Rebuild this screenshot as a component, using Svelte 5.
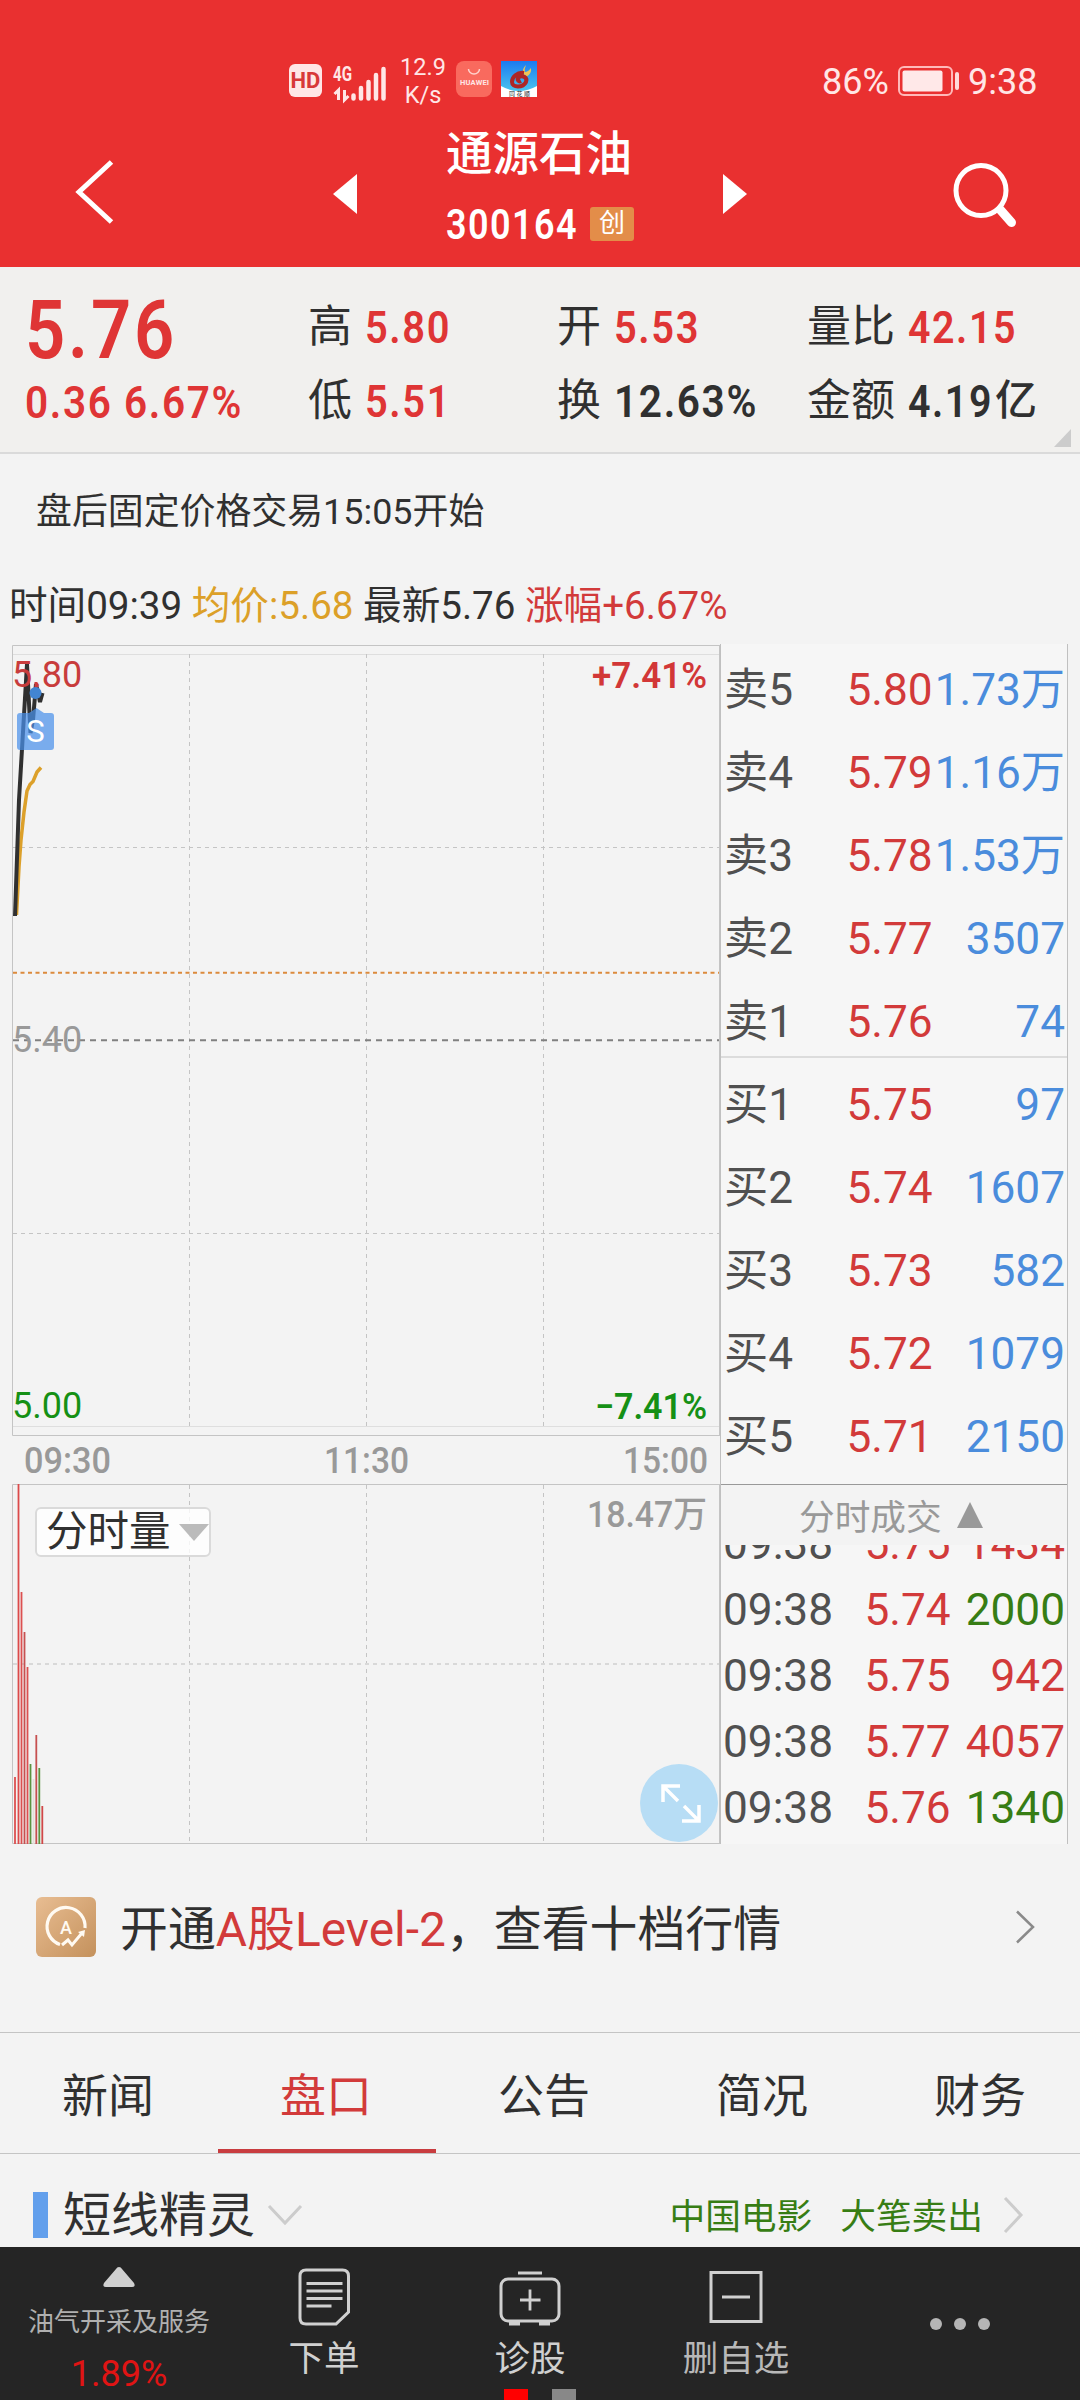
<script lang="ts">
	type Stat = { label: string; value: string; width: number; unit?: string; dark?: boolean };

	const stats: Stat[] = [
		{ label: '高', value: '5.80', width: 86 },
		{ label: '开', value: '5.53', width: 86 },
		{ label: '量比', value: '42.15', width: 109 },
		{ label: '低', value: '5.51', width: 86 },
		{ label: '换', value: '12.63%', width: 144, dark: true },
		{ label: '金额', value: '4.19', width: 85, unit: '亿', dark: true }
	];

	const orders = [
		['卖5', '5.80', '1.73万'],
		['卖4', '5.79', '1.16万'],
		['卖3', '5.78', '1.53万'],
		['卖2', '5.77', '3507'],
		['卖1', '5.76', '74'],
		['买1', '5.75', '97'],
		['买2', '5.74', '1607'],
		['买3', '5.73', '582'],
		['买4', '5.72', '1079'],
		['买5', '5.71', '2150']
	];

	const trades = [
		{ price: '5.75', vol: '1434', up: true },
		{ price: '5.74', vol: '2000', up: false },
		{ price: '5.75', vol: '942', up: true },
		{ price: '5.77', vol: '4057', up: true },
		{ price: '5.76', vol: '1340', up: false }
	];

	// x, top, colour of each minute's volume bar
	const bars: [number, number, string][] = [
		[15, 1777, '#dc5050'],
		[18.5, 1484, '#dc4a4a'],
		[21.5, 1592, '#dc5050'],
		[24.5, 1632, '#c65050'],
		[27.5, 1667, '#dc5050'],
		[30.5, 1764, '#5a9440'],
		[33.5, 1779, '#e4e0d8'],
		[36.3, 1735, '#c65050'],
		[39.3, 1768, '#5a9440'],
		[42.3, 1806, '#d04848']
	];

	const columns = [189.5, 366.5, 543.5];
	const tabs = ['新闻', '盘口', '公告', '简况', '财务'];
	let activeTab = $state('盘口');
</script>

{#snippet num(text: string, size: number, width: number)}
	<svg class="num" {width} height={size} viewBox="0 0 {width} {size}">
		<text x="0" y={size * 0.856} font-size={size} textLength={width} lengthAdjust="spacingAndGlyphs">{text}</text>
	</svg>
{/snippet}

<div class="screen">
	<header>
		<div class="status">
			<span class="hd">HD</span>
			<svg class="signal" width="56" height="46" viewBox="332 58 56 46">
				<text x="333" y="77" font-size="20" font-weight="700" textLength="19" lengthAdjust="spacingAndGlyphs">4G</text>
				<path d="M338.500 96V86l-4 4M344.500 86v10l4-4" fill="none" stroke="#ffe6e6" stroke-width="3" />
				<path d="M353.500 94.500v-3M361 94.500V84M368.500 94.500v-16.500M376 94.500V71M383.500 94.500V65" stroke="#ffe6e6" stroke-width="4.500" stroke-linecap="round" />
			</svg>
			<div class="speed"><span>12.9</span><span>K/s</span></div>
			<svg class="apps" width="82" height="37" viewBox="0 0 82 37">
				<rect width="36" height="36" rx="8" fill="#f96a5e" />
				<path d="M12.500 8a5.500 5 0 0 0 11 0" fill="none" stroke="#ffd2cc" stroke-width="1.500" />
				<text x="4" y="24" font-size="7.500" font-weight="700" textLength="29">HUAWEI</text>
				<defs>
					<linearGradient id="sky" x2="0" y2="1">
						<stop offset="0" stop-color="#1c7af0" />
						<stop offset="1" stop-color="#4cc6ee" />
					</linearGradient>
				</defs>
				<rect x="45" width="36" height="31" fill="url(#sky)" />
				<path d="M45 25q18 10 36 0v11H45z" fill="#fff" />
				<path d="M70 4q-2 4-1 7q3 0 6-4q1 6-5 9l-3-4q-1-4 3-8z" fill="#ecc35a" />
				<path d="M68 12c-7-1-12 4-12 9 0 6 11 6 14 0 2-5-4-7-7-5-3 3 0 5 2 4" fill="none" stroke="#ad2626" stroke-width="4" />
				<text x="53" y="35" class="tiny" font-size="6" textLength="21">同花顺</text>
			</svg>
			<span class="battery-text">86%</span>
			<svg class="battery" width="62" height="30" viewBox="0 0 62 30">
				<rect x="1" y="1" width="53" height="28" rx="5" fill="none" stroke="#ffb9b9" stroke-width="2" />
				<rect x="4.500" y="4.500" width="40" height="21" rx="2" fill="#ffe8e8" />
				<rect x="57" y="6" width="4" height="18" rx="2" fill="#ffd9d9" />
			</svg>
			<span class="clock">9:38</span>
		</div>

		<div class="title-bar">
			<svg class="back" width="44" height="70" viewBox="72 157 44 70">
				<path d="M111.500 162L79 192l32.500 30" fill="none" stroke="#fff" stroke-width="5" />
			</svg>
			<svg class="prev" width="24" height="40" viewBox="0 0 24 40"><path d="M24 0v40L0 20z" fill="#fff" /></svg>
			<div class="name">
				<h1>通源石油</h1>
				<div class="code">{@render num('300164', 42, 132)}<span class="badge">创</span></div>
			</div>
			<svg class="next" width="24" height="40" viewBox="0 0 24 40"><path d="M0 0v40l24-20z" fill="#fff" /></svg>
			<svg class="search" width="70" height="70" viewBox="950 160 70 70">
				<circle cx="981" cy="190.500" r="25" fill="none" stroke="#fff" stroke-width="5" />
				<path d="M1000.500 210l11 12.500" stroke="#fff" stroke-width="9" stroke-linecap="round" />
			</svg>
		</div>
	</header>

	<section class="quote">
		<div class="last">
			<div class="price">{@render num('5.76', 82, 152)}</div>
			<div class="change">{@render num('0.36 6.67%', 44, 218)}</div>
		</div>
		<div class="stats">
			{#each stats as s}
				<div class="stat" class:dark={s.dark}>
					<span class="label">{s.label}</span>
					{@render num(s.value, 44, s.width)}
					{#if s.unit}<span class="unit">{s.unit}</span>{/if}
				</div>
			{/each}
		</div>
		<i class="corner"></i>
	</section>

	<p class="notice">盘后固定价格交易15:05开始</p>
	<p class="legend">时间09:39 <span class="avg">均价:5.68</span> 最新5.76 <span class="red">涨幅+6.67%</span></p>

	<section class="market">
		<div class="chart">
			<svg width="720" height="1200" viewBox="0 644 720 1200">
				<g fill="none" stroke="#c4c4c4">
					<path d="M12.500 1435.500V645.500H720M12.500 1435.500H720M12.500 1843.500V1484.500H720M12.500 1843.500H720M719.500 645V1435M719.500 1484V1843" />
					<path d="M13 654.500H719M13 1426.500H719" stroke="#dedede" />
					{#each columns as x}
						<path d="M{x} 654V1426M{x} 1485V1843" stroke-dasharray="4 4" />
					{/each}
					<path d="M13 847.500H719M13 1233.500H719" stroke-dasharray="4 4" />
					<path d="M13 1664H719" stroke="#d8d8d8" stroke-width="2" stroke-dasharray="4 4" />
					<path d="M13 972.700H719" stroke="#dc8a3c" stroke-width="2" stroke-dasharray="4 3.500" />
					<path d="M13 1040.300H719" stroke="#808080" stroke-width="2" stroke-dasharray="6 5" />
				</g>

				{#each bars as [x, top, colour]}
					<path d="M{x} {top}V1844" stroke={colour} stroke-width="1.800" />
				{/each}

				<path d="M16.500 915L19 867 21 840 24 812 27 791 30 784.500 33 781.500 37 772 41 767.500" fill="none" stroke="#dca02a" stroke-width="3.500" />
				<path d="M15 916L19 800 23 732 27 664 30.500 733 33 720 36 684 40 702 42.500 693" fill="none" stroke="#303030" stroke-width="4" />
				<path d="M36 682v6" stroke="#d23c3c" stroke-width="3" />
				<circle cx="35.500" cy="693" r="6" fill="#4285d2" />
				<path d="M20 713h9l7.500-5 7.500 5h7q3 0 3 3v31q0 3-3 3H20q-3 0-3-3v-31q0-3 3-3z" fill="#4a90ea" fill-opacity=".72" />
				<text x="35.500" y="741.500" font-size="31" text-anchor="middle" fill="#fff">S</text>

				<g font-size="36">
					<text x="12" y="687" fill="#c83c3c">5.80</text>
					<text x="12" y="1052" fill="#999">5.40</text>
					<text x="12" y="1418" fill="#159015">5.00</text>
					<g font-weight="600">
						<text x="592" y="687.500" fill="#d23737" textLength="115" lengthAdjust="spacingAndGlyphs">+7.41%</text>
						<text x="595" y="1418.500" fill="#159015" textLength="112" lengthAdjust="spacingAndGlyphs">−7.41%</text>
					</g>
					<g font-weight="500" fill="#999">
						<text x="24" y="1472.500" textLength="87" lengthAdjust="spacingAndGlyphs">09:30</text>
						<text x="324" y="1472.500" textLength="85" lengthAdjust="spacingAndGlyphs">11:30</text>
						<text x="623" y="1472.500" textLength="85" lengthAdjust="spacingAndGlyphs">15:00</text>
						<text x="587" y="1526.500" textLength="120" lengthAdjust="spacingAndGlyphs">18.47万</text>
					</g>
				</g>
			</svg>
			<button class="picker">分时量<i></i></button>
			<button class="expand" aria-label="全屏">
				<svg width="78" height="78" viewBox="640 1764 78 78">
					<path d="M680 1786H663v16M664 1787l14 14M682 1821h17v-16M698 1820l-14-14" fill="none" stroke="#fff" stroke-width="3.500" />
				</svg>
			</button>
		</div>

		<div class="book">
			<div class="orders">
				{#each orders as [label, price, vol], i}
					<div class="order" class:split={i === 4}>
						<span class="side">{label}</span>
						<span class="red">{price}</span>
						<span class="vol">{vol}</span>
					</div>
				{/each}
			</div>
			<div class="deals-head">分时成交<i></i></div>
			<div class="deals">
				{#each trades as t}
					<div class="deal">
						<span class="side">09:38</span>
						<span class="red">{t.price}</span>
						<span class="vol" class:red={t.up} class:green={!t.up}>{t.vol}</span>
					</div>
				{/each}
			</div>
		</div>
	</section>

	<section class="level2">
		<svg width="60" height="60" viewBox="0 0 60 60">
			<defs>
				<linearGradient id="gold" x2="1" y2="1">
					<stop offset="0" stop-color="#e8bd92" />
					<stop offset="1" stop-color="#c4915c" />
				</linearGradient>
			</defs>
			<rect width="60" height="60" rx="6" fill="url(#gold)" />
			<path d="M24 47.500A19 19 0 1 1 49 31" fill="none" stroke="#fffaf2" stroke-width="3.200" />
			<path d="M26 48l6-5 4 5 10-12" fill="none" stroke="#fffaf2" stroke-width="3" />
			<path d="M42 35l7-2-1 7z" fill="#fffaf2" />
			<text x="30" y="36.500" font-size="18" font-weight="500" text-anchor="middle" fill="#fffaf2">A</text>
		</svg>
		<p>开通<span class="red">A股Level-2</span>，查看十档行情</p>
		<svg class="go" width="22" height="36" viewBox="0 0 22 36"><path d="M2 2.500L18 18 2 33.500" fill="none" stroke="#8a8a8a" stroke-width="2.500" /></svg>
	</section>

	<nav class="tabs">
		{#each tabs as tab}
			<button class:active={tab === activeTab} onclick={() => (activeTab = tab)}>{tab}</button>
		{/each}
	</nav>

	<section class="sprite">
		<i class="mark"></i>
		<h2>短线精灵</h2>
		<svg class="down" width="36" height="22" viewBox="0 0 36 22"><path d="M2 2l16 17L34 2" fill="none" stroke="#ccc" stroke-width="3" /></svg>
		<div class="event"><span>中国电影</span><span>大笔卖出</span></div>
		<svg width="22" height="38" viewBox="0 0 22 38"><path d="M2 2l16 17L2 36" fill="none" stroke="#ccc" stroke-width="3" /></svg>
	</section>

	<footer>
		<div class="sector">
			<svg width="34" height="22" viewBox="0 0 34 22"><path d="M17 1q2 0 3 2l12 14q2 4-2 4H4q-4 0-2-4L14 3q1-2 3-2z" fill="#d0d0d0" /></svg>
			<span>油气开采及服务</span>
			<b>1.89%</b>
		</div>
		<div class="action">
			<svg width="62" height="58" viewBox="292.500 2268 62 58">
				<path d="M305.500 2270h36.500q6 0 6 6v36l-12.500 12h-30q-6 0-6-6v-42q0-6 6-6z" />
				<path d="M306 2283.500h36M306 2291h36M306 2298.500h36M306 2306h25" stroke-width="2.800" />
			</svg>
			<span>下单</span>
		</div>
		<div class="action">
			<svg width="62" height="58" viewBox="499 2268 62 58">
				<rect x="501" y="2279" width="58" height="42" rx="7" />
				<path d="M518 2273h24M520 2300h20.500M530 2289.500v21" stroke-width="2.800" />
				<path d="M509 2323.500h11M539 2323.500h11" stroke-width="4" />
			</svg>
			<span>诊股</span>
		</div>
		<div class="action dim">
			<svg width="62" height="58" viewBox="705 2268 62 58">
				<path d="M711 2272.500h50v49h-50zM722 2297h28" />
			</svg>
			<span>删自选</span>
		</div>
		<div class="more"><i></i><i></i><i></i></div>
		<div class="pages"><i class="on"></i><i></i></div>
	</footer>
</div>

<style>
	:global(body) {
		background: #f3f3f3;
	}

	.screen {
		width: 1080px;
		height: 2400px;
		overflow: hidden;
		background: #f3f3f3;
		color: #303030;
		font-family: Roboto, 'Noto Sans CJK SC', sans-serif;
	}

	svg {
		display: block;
		flex: none;
	}

	h1,
	h2,
	p {
		margin: 0;
		font-weight: 400;
	}

	button {
		border: 0;
		padding: 0;
		background: none;
		color: inherit;
		font: inherit;
	}

	.num {
		overflow: visible;
		fill: currentColor;
		font-weight: 600;
	}

	.num text {
		letter-spacing: 0.04em;
	}

	.red {
		color: #d23a3a;
	}

	.green {
		color: #377d14;
	}

	header {
		height: 267px;
		background: #e93030;
		color: #fff;
	}

	.status {
		display: flex;
		align-items: flex-start;
		height: 120px;
		padding-left: 289px;
		color: #ffe6e6;
		fill: #ffe6e6;
	}

	.hd {
		width: 33px;
		height: 33px;
		margin-top: 64px;
		border-radius: 6px;
		background: #ffe6e6;
		color: #d83838;
		font-size: 22px;
		font-weight: 700;
		line-height: 33px;
		text-align: center;
	}

	.signal {
		margin: 62px 0 0 10px;
	}

	.speed {
		display: flex;
		flex-direction: column;
		width: 50px;
		margin: 53px 0 0 10px;
		font-size: 23.500px;
		line-height: 28px;
		text-align: center;
	}

	.apps {
		margin: 61px 0 0 8px;
	}

	.tiny {
		fill: #222;
	}

	.battery-text,
	.clock {
		margin-top: 61px;
		font-size: 36px;
		line-height: 42px;
	}

	.battery-text {
		width: 76px;
		margin-left: 284px;
	}

	.battery {
		margin-top: 66px;
	}

	.clock {
		margin-left: 8px;
	}

	.title-bar {
		display: flex;
		height: 147px;
	}

	.back {
		margin: 37px 0 0 72px;
	}

	.prev {
		margin: 54px 0 0 217px;
	}

	.name {
		width: 200px;
		margin-left: 89px;
	}

	h1 {
		margin-top: 6px;
		font-size: 46.500px;
		font-weight: 500;
		line-height: 56px;
	}

	.code {
		display: flex;
		align-items: center;
		height: 42px;
		margin-top: 21px;
	}

	.badge {
		width: 44px;
		height: 34px;
		margin-left: 12px;
		border-radius: 3px;
		background: #e38d49;
		font-size: 26px;
		line-height: 33px;
		text-align: center;
	}

	.next {
		margin: 54px 0 0 77px;
	}

	.search {
		margin: 40px 0 0 203px;
	}

	.quote {
		position: relative;
		display: flex;
		height: 185px;
		border-bottom: 2px solid #dadada;
		background: #f1f0ee;
		color: #df3535;
	}

	.last {
		width: 283px;
		padding-left: 25px;
	}

	.price {
		margin-top: 21px;
	}

	.change {
		margin-top: 10px;
	}

	.stats {
		display: grid;
		grid-template-columns: 249px 250px 264px;
		grid-auto-rows: 74px;
		padding-top: 23px;
	}

	.stat {
		display: flex;
		align-items: center;
	}

	.stat .label {
		color: #303030;
		margin-right: 13px;
		font-size: 44px;
		line-height: 60px;
	}

	.stat.dark {
		color: #303030;
	}

	.unit {
		margin-left: 2px;
		font-size: 42px;
		font-weight: 500;
		line-height: 60px;
	}

	.corner {
		position: absolute;
		right: 9px;
		bottom: 5px;
		border-bottom: 18px solid #ccc;
		border-left: 17px solid transparent;
	}

	.notice {
		padding: 31px 36px 0;
		font-size: 35.900px;
		line-height: 54px;
	}

	.legend {
		height: 68px;
		padding: 37px 9px 0;
		font-size: 38.600px;
		line-height: 60px;
		white-space: nowrap;
	}

	.avg {
		color: #dca028;
	}

	.market {
		display: flex;
		height: 1200px;
	}

	.chart {
		position: relative;
		width: 720px;
	}

	.picker {
		position: absolute;
		top: 863px;
		left: 35px;
		display: flex;
		align-items: center;
		box-sizing: border-box;
		width: 176px;
		height: 50px;
		padding-left: 9px;
		border: 2px solid #dadada;
		border-radius: 6px;
		background: rgba(255, 255, 255, 0.8);
		font-size: 41.500px;
		line-height: 46px;
		white-space: nowrap;
	}

	.picker i {
		flex: none;
		margin-left: 8px;
		border: solid transparent;
		border-width: 17px 15px 0;
		border-top-color: #bbb;
	}

	.expand {
		position: absolute;
		top: 1120px;
		left: 640px;
		width: 78px;
		height: 78px;
		border-radius: 50%;
		background: #b7ddf5;
	}

	.book {
		box-sizing: border-box;
		width: 348px;
		border-right: 1px solid #c0c0c0;
		border-left: 1px solid #c0c0c0;
		background: #f6f6f6;
		color: #505050;
		font-size: 44.200px;
	}

	.orders {
		box-sizing: border-box;
		height: 840px;
		padding-top: 5px;
	}

	.order,
	.deal {
		display: flex;
		padding: 0 2px 0 3px;
	}

	.order {
		height: 83px;
		line-height: 83px;
		white-space: nowrap;
	}

	.split {
		background: linear-gradient(#dcdcdc, #dcdcdc) 0 75px / 100% 2px no-repeat;
	}

	.order .side {
		width: 122.500px;
	}

	.vol {
		margin-left: auto;
	}

	.order .vol {
		color: #4a8cdc;
	}

	.deals-head {
		display: flex;
		align-items: center;
		box-sizing: border-box;
		height: 61px;
		padding: 0 0 1px 78px;
		border-top: 1px solid #999;
		background: #f3f3f3;
		color: #999;
		font-size: 35.700px;
	}

	.deals-head i {
		margin-left: 15px;
		border: solid transparent;
		border-width: 0 13px 26px;
		border-bottom-color: #999;
	}

	.deals {
		display: flex;
		flex-direction: column;
		justify-content: flex-end;
		box-sizing: border-box;
		height: 299px;
		padding-bottom: 3px;
		overflow: hidden;
	}

	.deal {
		flex: none;
		height: 66px;
		padding-left: 2px;
		line-height: 66px;
	}

	.deal .side {
		width: 141.500px;
	}

	.level2 {
		display: flex;
		align-items: flex-start;
		box-sizing: border-box;
		height: 188px;
		padding: 53px 43px 0 36px;
		font-size: 47.900px;
	}

	.level2 p {
		flex: 1;
		padding-left: 24px;
		line-height: 67px;
		white-space: nowrap;
	}

	.go {
		margin-top: 12px;
	}

	.tabs {
		display: grid;
		grid-template-columns: repeat(5, 218px);
		box-sizing: border-box;
		height: 122px;
		border: solid #c4c4c4;
		border-width: 1px 0;
	}

	.tabs button {
		width: 218px;
		padding: 1px 2px 0 0;
		border-bottom: 4px solid transparent;
		font-size: 46px;
	}

	.tabs .active {
		border-bottom-color: #c83c3f;
		color: #d23a3a;
	}

	.sprite {
		display: flex;
		align-items: center;
		box-sizing: border-box;
		height: 93px;
		padding: 28px 55px 0 33px;
	}

	.mark {
		width: 15px;
		height: 46px;
		background: #629fec;
	}

	h2 {
		margin-left: 15px;
		padding-top: 2px;
		font-size: 48px;
		line-height: 60px;
	}

	.down {
		margin-left: 12px;
	}

	.event {
		display: flex;
		gap: 28px;
		margin: 0 20px 0 auto;
		padding-bottom: 3px;
		color: #377d14;
		font-size: 35.700px;
	}

	footer {
		position: relative;
		display: grid;
		grid-template-columns: 221px 206px 206px 206px 241px;
		height: 153px;
		background: #252525;
		color: #d0d0d0;
	}

	.sector {
		display: flex;
		flex-direction: column;
		align-items: center;
		padding: 19px 0 0 17px;
		color: #b0b0b0;
		font-size: 26px;
		line-height: 36px;
		white-space: nowrap;
	}

	.sector span {
		margin-top: 16px;
	}

	.sector b {
		margin-top: 13px;
		color: #e01414;
		font-size: 36px;
		font-weight: 400;
		line-height: 42px;
	}

	.action {
		display: flex;
		flex-direction: column;
		align-items: center;
		padding-top: 21px;
		font-size: 35.500px;
		line-height: 50px;
	}

	.action svg {
		fill: none;
		stroke: #d0d0d0;
		stroke-width: 3px;
	}

	.action span {
		margin-top: 8px;
	}

	.dim {
		color: #b8b8b8;
	}

	.more {
		display: flex;
		justify-content: center;
		gap: 12px;
		padding-top: 71px;
	}

	.more i {
		width: 12px;
		height: 12px;
		border-radius: 50%;
		background: #b5b5b5;
	}

	.pages {
		position: absolute;
		bottom: 0;
		left: 504px;
		display: flex;
		gap: 24px;
	}

	.pages i {
		width: 24px;
		height: 11px;
		background: #888;
	}

	.pages .on {
		background: #f00;
	}
</style>
